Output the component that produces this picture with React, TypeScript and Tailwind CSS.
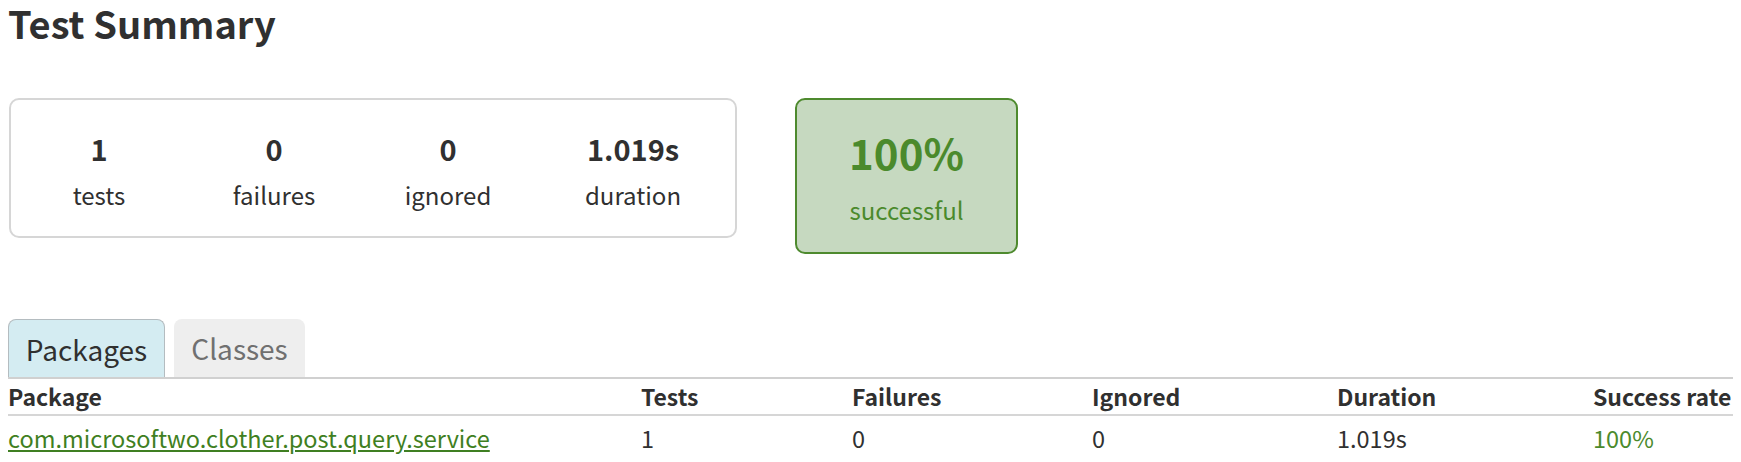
import React from "react";

const font = { fontFamily: '"Noto Sans CJK KR", "Noto Sans", sans-serif' };

function InfoBox({ value, label, w }: { value: string; label: string; w: string }) {
  return (
    <div className={`${w} flex flex-col items-center`}>
      <div className="text-[29px] font-bold leading-none text-[#303030]">{value}</div>
      <div className="mt-[20px] text-[24px] leading-none text-[#303030]">{label}</div>
    </div>
  );
}

export default function App() {
  const cols = "grid grid-cols-[633px_211px_240px_245px_256px_1fr]";
  return (
    <div className="w-[1741px] h-[462px] overflow-hidden bg-white px-[8px] text-[#303030]" style={font}>
      <h1 className="text-[38px] font-bold leading-[46px] text-[#303030]">Test Summary</h1>

      <div className="mt-[52px] flex items-start">
        <div className="ml-[1px] flex h-[140px] w-[728px] items-start rounded-[10px] border-2 border-[#d6d6d6] px-[2px] pt-[34px]">
          <InfoBox value="1" label="tests" w="w-[172px]" />
          <InfoBox value="0" label="failures" w="w-[178px]" />
          <InfoBox value="0" label="ignored" w="w-[170px]" />
          <InfoBox value="1.019s" label="duration" w="w-[200px]" />
        </div>
        <div className="ml-[58px] flex h-[156px] w-[223px] flex-col items-center rounded-[10px] border-2 border-[#4e8a2e] bg-[#c6d9c0] pt-[31px]">
          <div className="text-[42px] font-bold leading-none text-[#4b8a2c]">100%</div>
          <div className="mt-[25px] text-[24px] leading-none text-[#4b8a2c]">successful</div>
        </div>
      </div>

      <div className="mt-[65px] flex items-end gap-[9px] border-b-2 border-[#d0d0d0]">
        <div className="flex h-[58px] w-[157px] items-center justify-center rounded-t-[8px] border border-b-0 border-[#b4bcc0] bg-[#d4ecf2] text-[28px] text-[#303030]">
          Packages
        </div>
        <div className="flex h-[58px] w-[131px] items-center justify-center rounded-t-[8px] bg-[#eeeeee] text-[28px] text-[#707070]">
          Classes
        </div>
      </div>

      <div className={`${cols} h-[37px] items-center border-b-2 border-[#d6d6d6] text-[23px] font-bold`}>
        <div>Package</div>
        <div>Tests</div>
        <div>Failures</div>
        <div>Ignored</div>
        <div>Duration</div>
        <div>Success rate</div>
      </div>
      <div className={`${cols} h-[46px] items-center text-[23.5px]`}>
        <div>
          <a href="#" className="text-[#3f7f22] underline">com.microsoftwo.clother.post.query.service</a>
        </div>
        <div>1</div>
        <div>0</div>
        <div>0</div>
        <div>1.019s</div>
        <div className="text-[#4b8a2c]">100%</div>
      </div>
    </div>
  );
}
